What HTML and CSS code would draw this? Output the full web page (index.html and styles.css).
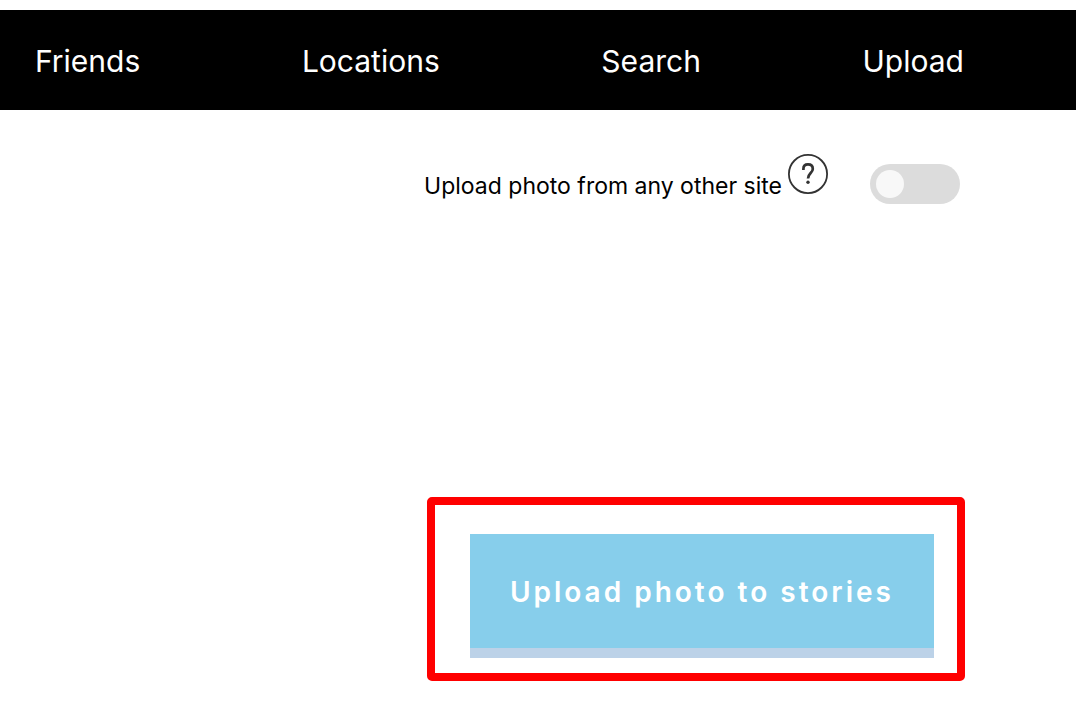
FILE: index.html
```html
<!DOCTYPE html>
<html lang="en">
<head>
<meta charset="utf-8">
<title>Upload</title>
<link rel="stylesheet" href="styles.css">
</head>
<body>
<nav class="nav">
  <a href="#friends">Friends</a>
  <a href="#locations">Locations</a>
  <a href="#search">Search</a>
  <a href="#upload">Upload</a>
</nav>
<main class="content">
  <div class="option">
    <label for="other-site">Upload photo from any other site</label>
    <button class="help" type="button" aria-label="Help">
      <svg viewBox="0 0 40 40" width="40" height="40" fill="none" stroke="#333" aria-hidden="true">
        <circle cx="20" cy="20" r="19.100" stroke-width="1.800"/>
        <path d="M15.400 16V15C15.400 12 17.200 10.400 20 10.400C23 10.400 24.800 12.300 24.800 15C24.800 19 20 19.200 20 24.600" stroke-width="2.700"/>
        <circle cx="20" cy="28.300" r="1.700" fill="#333" stroke="none"/>
      </svg>
    </button>
    <input class="switch" id="other-site" type="checkbox" role="switch">
  </div>
  <section class="highlight">
    <button class="upload" type="button">Upload photo to stories</button>
  </section>
</main>
</body>
</html>
```
FILE: styles.css
```css
* { box-sizing: border-box; }
body {
  margin: 0;
  padding-top: 10px;
  background: #fff;
  color: #000;
  font-family: Inter, "Liberation Sans", sans-serif;
}
.nav {
  display: flex;
  justify-content: space-between;
  align-items: center;
  padding: 31px 112px 29px 35px;
  background: #000;
}
.nav a {
  color: #fff;
  font-size: 30px;
  line-height: 40px;
  text-decoration: none;
}
.content {
  display: flex;
  flex-direction: column;
  align-items: flex-end;
  padding: 44px 111px 24px 24px;
}
.option {
  display: flex;
  align-items: flex-start;
  padding-right: 5px;
}
.option label {
  padding-top: 16px;
  font-size: 23px;
  line-height: 32px;
}
.help {
  width: 40px;
  height: 40px;
  margin: 0 42px 0 6px;
  padding: 0;
  border: 0;
  background: none;
}
.help svg { display: block; }
.switch {
  appearance: none;
  width: 90px;
  height: 40px;
  margin: 10px 0 0;
  padding: 6px;
  border-radius: 20px;
  background: #dcdcdc;
}
.switch::before {
  content: "";
  display: block;
  width: 28px;
  height: 28px;
  border-radius: 50%;
  background: #f8f8f8;
}
.switch:checked::before { margin-left: auto; }
.highlight {
  margin-top: 293px;
  padding: 29px 23px 15px 35px;
  border: 8px solid #f00;
  border-radius: 5px;
}
.upload {
  display: block;
  padding: 38px 40px 36px;
  border: 0;
  border-bottom: 10px solid #bcd2e8;
  background: #87ceeb;
  color: #fff;
  font-family: inherit;
  font-size: 28px;
  font-weight: 600;
  line-height: 40px;
  letter-spacing: 3px;
}
```
